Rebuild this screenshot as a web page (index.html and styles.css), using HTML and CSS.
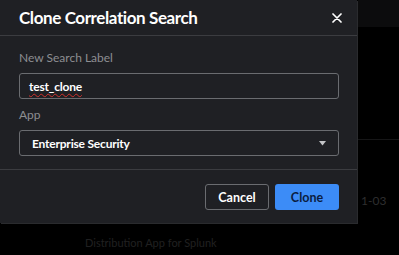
FILE: index.html
```html
<!DOCTYPE html>
<html>
<head>
    <title>Clone Correlation Search</title>
    <link rel="stylesheet" href="styles.css">
</head>
<body>
    <div class="page">
        <div class="backdrop">
            <div class="backdrop-top"></div>
            <div class="backdrop-line"></div>
            <div class="backdrop-date">1-03</div>
            <div class="backdrop-app">Distribution App for Splunk</div>
        </div>
        <div class="modal">
            <div class="modal-header">
                <h1>Clone Correlation Search</h1>
                <span class="close">
                    <svg width="10" height="10" viewBox="0 0 10 10">
                        <path d="M1 1 L9 9 M9 1 L1 9" stroke="#ffffff" stroke-width="1.7" stroke-linecap="round"/>
                    </svg>
                </span>
            </div>
            <div class="modal-body">
                <label for="label">New Search Label</label>
                <div class="field"><span class="spell">test_clone</span></div>
                <label>App</label>
                <div class="field select">
                    <span>Enterprise Security</span>
                    <svg width="7" height="5" viewBox="0 0 7 5">
                        <path d="M0 0 L7 0 L3.5 4.5 Z" fill="#c3c4c7"/>
                    </svg>
                </div>
            </div>
            <div class="modal-footer">
                <button class="btn btn-cancel">Cancel</button>
                <button class="btn btn-clone">Clone</button>
            </div>
        </div>
    </div>
</body>
</html>
```
FILE: styles.css
```css
/* page and backdrop */
body {
    margin: 0;
    background-color: #000000;
    font-family: Lato, "Open Sans", Arial, sans-serif;
}

.page {
    position: relative;
    width: 399px;
    height: 255px;
    overflow: hidden;
}

.backdrop-top {
    position: absolute;
    top: 0;
    left: 358px;
    width: 41px;
    height: 27px;
    background-color: #0c0c0d;
}

.backdrop-line {
    position: absolute;
    top: 139px;
    left: 358px;
    width: 41px;
    height: 1px;
    background-color: #161617;
}

.backdrop-date {
    position: absolute;
    top: 193px;
    left: 361px;
    font-size: 12px;
    color: #2e2e2f;
}

.backdrop-app {
    position: absolute;
    top: 236px;
    left: 85px;
    font-size: 11px;
    color: #202021;
}

/* modal */
.modal {
    position: relative;
    width: 357px;
    height: 223px;
    background-color: #1f2024;
    box-shadow: 1px 1px 0 #2a2b2e;
    color: #ffffff;
}

.modal-header {
    display: flex;
    align-items: center;
    justify-content: space-between;
    height: 35px;
    padding: 0 15px 0 19px;
    border-bottom: 1px solid #3b3c40;
}

h1 {
    margin: 0;
    font-size: 17px;
    font-weight: 700;
    letter-spacing: -0.4px;
}

.close {
    display: flex;
}

.modal-body {
    padding: 14px 18px 13px 19px;
    border-bottom: 1px solid #3b3c40;
}

label {
    display: block;
    font-size: 12px;
    color: #8d8e92;
    line-height: 16px;
    margin-bottom: 7px;
}

.field {
    display: flex;
    align-items: center;
    justify-content: space-between;
    height: 24px;
    padding: 0 12px 0 9px;
    border: 1px solid #6a6c70;
    border-radius: 3px;
    font-size: 12px;
    font-weight: 700;
    letter-spacing: -0.2px;
    margin-bottom: 8px;
}

.field.select {
    padding-left: 12px;
    margin-bottom: 0;
}

.spell {
    text-decoration: underline wavy #d0312d;
    text-decoration-thickness: 1px;
    text-underline-offset: 2px;
}

.modal-footer {
    display: flex;
    justify-content: flex-end;
    gap: 6px;
    padding: 14px 18px 0 0;
}

.btn {
    width: 64px;
    height: 26px;
    border-radius: 3px;
    font-family: Lato, "Open Sans", Arial, sans-serif;
    font-size: 12.5px;
    font-weight: 700;
    cursor: pointer;
}

.btn-cancel {
    background-color: #1f2024;
    border: 1px solid #6a6c70;
    color: #ffffff;
}

.btn-clone {
    background-color: #3c8cf7;
    border: none;
    color: #0b1d3f;
}
```
